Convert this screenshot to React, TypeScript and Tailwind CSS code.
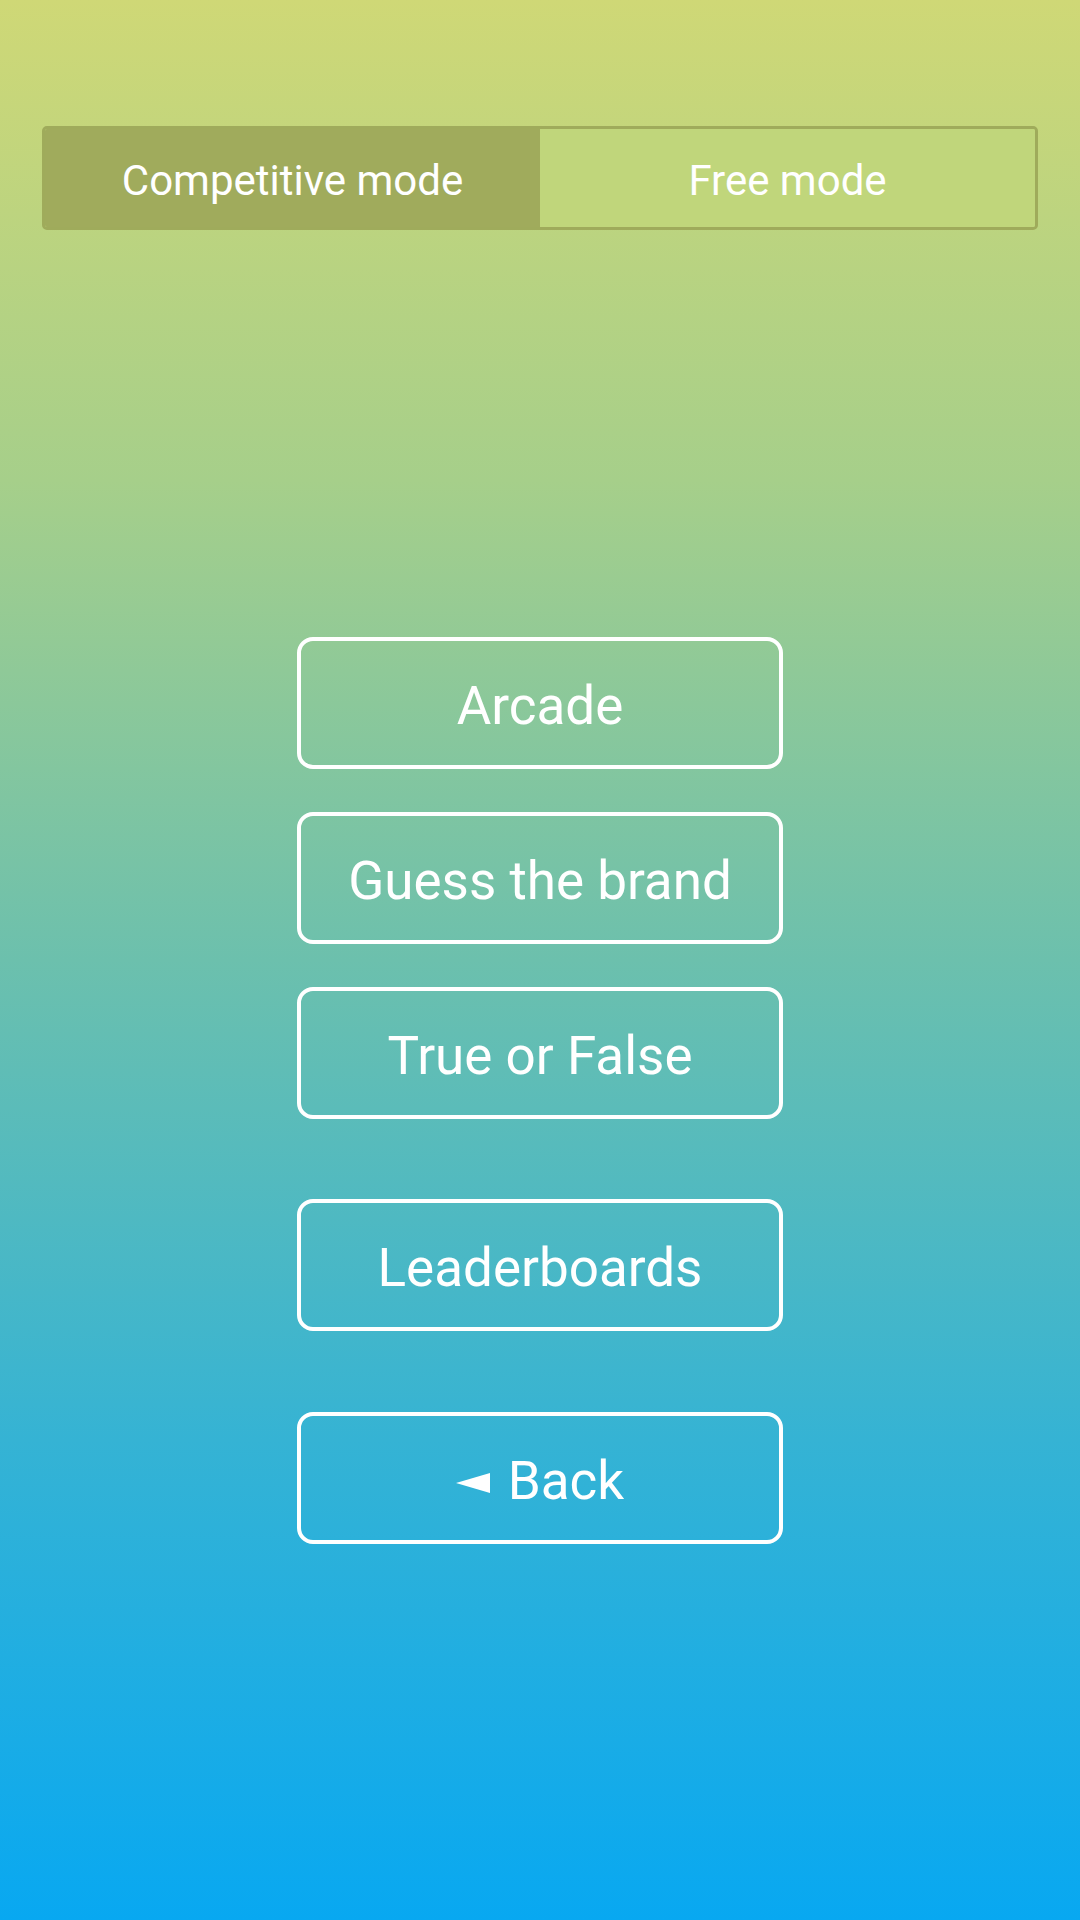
import React from 'react';

const modes = [
  { label: 'Competitive mode', active: true },
  { label: 'Free mode', active: false },
];

const Button = ({ children, className = '' }: { children: React.ReactNode; className?: string }) => (
  <button className={`w-[486px] h-[132px] rounded-[16px] border-[4px] border-white text-white text-[53px] leading-none flex items-center justify-center pt-[6px] ${className}`}>
    {children}
  </button>
);

const App = () => {
  return (
    <div
      className="w-full h-[1920px] flex flex-col items-center bg-[linear-gradient(to_bottom,#cfd876_0%,#a6cf8a_25%,#6cc0ad_50%,#35b3d4_75%,#08a8f1_100%)]"
      style={{ fontFamily: 'Roboto, "Noto Sans", sans-serif' }}
    >
      {/* Mode tabs */}
      <div className="mt-[126px] w-[996px] h-[104px] flex rounded-[5px] border-[3px] border-[#9fab5b] overflow-hidden">
        {modes.map((mode) => (
          <div
            key={mode.label}
            className={`flex-1 flex items-center justify-center pt-[5px] text-white text-[42px] ${
              mode.active ? 'bg-[#a0ab5c]' : 'bg-[#c0d67b]'
            }`}
          >
            {mode.label}
          </div>
        ))}
      </div>

      {/* Game menu */}
      <div className="mt-[407px] flex flex-col items-center">
        <Button>Arcade</Button>
        <Button className="mt-[43px]">Guess the brand</Button>
        <Button className="mt-[43px]">True or False</Button>
        <Button className="mt-[80px]">Leaderboards</Button>
        <Button className="mt-[81px]">
          <svg width="34" height="20" viewBox="0 0 34 20" className="mr-[18px] mt-[4px]">
            <polygon points="0,10 34,0 34,20" fill="white" />
          </svg>
          Back
        </Button>
      </div>
    </div>
  );
};

export default App;
